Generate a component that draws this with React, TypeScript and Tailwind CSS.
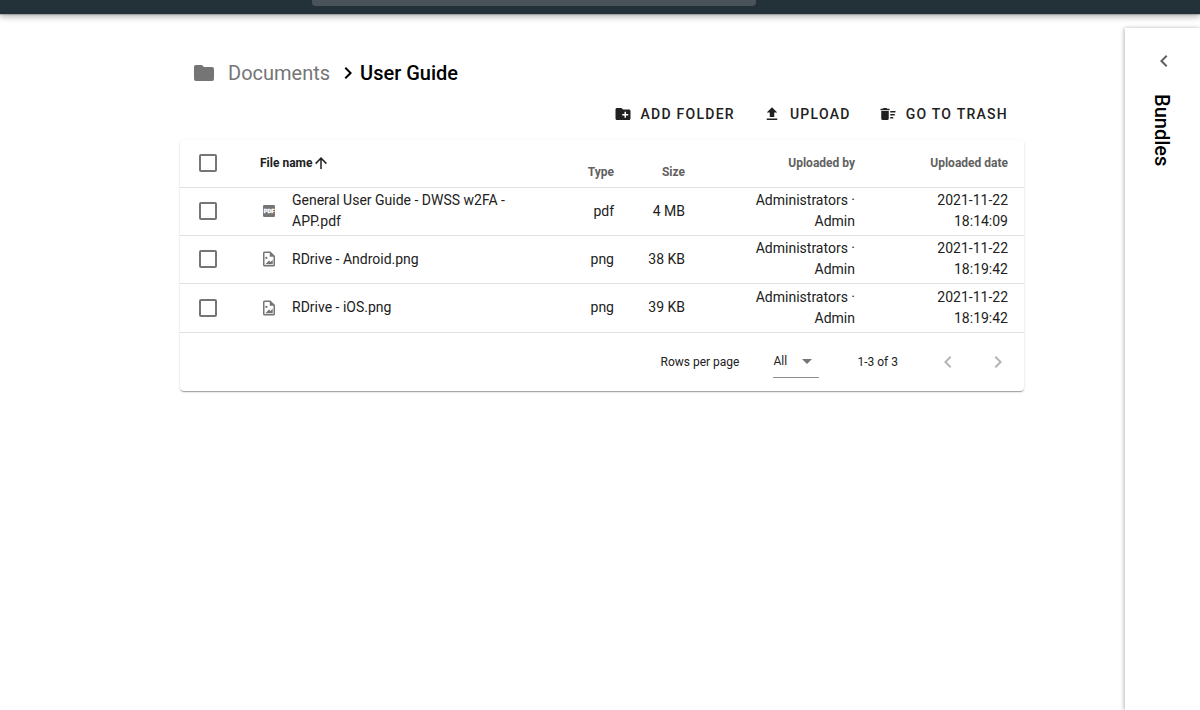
import React, { useState } from "react";

const paths = {
  folder: "M10,4H4C2.89,4 2,4.89 2,6V18A2,2 0 0,0 4,20H20A2,2 0 0,0 22,18V8C22,6.89 21.1,6 20,6H12L10,4Z",
  addFolder:
    "M20 6h-8l-2-2H4c-1.11 0-1.99.89-1.99 2L2 18c0 1.11.89 2 2 2h16c1.11 0 2-.89 2-2V8c0-1.11-.89-2-2-2zm-1 8h-3v3h-2v-3h-3v-2h3V9h2v3h3v2z",
  upload: "M9 16h6v-6h4l-7-7-7 7h4zm-4 2h14v2H5z",
  trash:
    "M15,16H19V18H15V16M15,8H22V10H15V8M15,12H21V14H15V12M3,18A2,2 0 0,0 5,20H11A2,2 0 0,0 13,18V8H3V18M14,5H11L10,4H6L5,5H2V7H14V5Z",
  image:
    "M14,2L20,8V20A2,2 0 0,1 18,22H6A2,2 0 0,1 4,20V4A2,2 0 0,1 6,2H14M18,20V9H13V4H6V20H18M17,13V19H7L12,14L14,16M10,10.5A1.5,1.5 0 0,1 8.5,12A1.5,1.5 0 0,1 7,10.5A1.5,1.5 0 0,1 8.5,9A1.5,1.5 0 0,1 10,10.5Z",
  arrowUp: "M13,20H11V8L5.5,13.5L4.08,12.08L12,4.16L19.92,12.08L18.5,13.5L13,8V20Z",
  right: "M8.59,16.58L13.17,12L8.59,7.41L10,6L16,12L10,18L8.59,16.58Z",
  left: "M15.41,16.58L10.83,12L15.41,7.41L14,6L8,12L14,18L15.41,16.58Z",
  down: "M7,10L12,15L17,10H7Z",
};

function Icon({ name, className }: { name: keyof typeof paths; className: string }) {
  return (
    <svg viewBox="0 0 24 24" aria-hidden="true" className={className} fill="currentColor">
      <path d={paths[name]} />
    </svg>
  );
}

function PdfIcon() {
  return (
    <svg viewBox="0 0 18 18" aria-hidden="true" className="size-[18px] shrink-0">
      <rect x="3" y="3" width="12" height="12" rx="1.3" fill="#757575" />
      <text x="9" y="11.2" textAnchor="middle" fontSize="5.8" fontWeight="900" fill="#fff" stroke="#fff" strokeWidth="0.3">
        PDF
      </text>
    </svg>
  );
}

function Check({ label, checked, onChange }: { label: string; checked: boolean; onChange: () => void }) {
  return (
    <input
      type="checkbox"
      aria-label={label}
      checked={checked}
      onChange={onChange}
      className="block size-[18px] appearance-none rounded-[2px] border-2 border-[#757575] bg-white checked:bg-[#757575]"
    />
  );
}

const files = [
  { name: "General User Guide - DWSS w2FA - APP.pdf", type: "pdf", size: "4 MB", date: "2021-11-22 18:14:09" },
  { name: "RDrive - Android.png", type: "png", size: "38 KB", date: "2021-11-22 18:19:42" },
  { name: "RDrive - iOS.png", type: "png", size: "39 KB", date: "2021-11-22 18:19:42" },
];

const actions = [
  { icon: "addFolder", label: "Add folder" },
  { icon: "upload", label: "Upload" },
  { icon: "trash", label: "Go to trash" },
] as const;

export default function App() {
  const [selected, setSelected] = useState<string[]>([]);
  const toggle = (name: string) =>
    setSelected((s) => (s.includes(name) ? s.filter((n) => n !== name) : [...s, name]));
  const all = selected.length === files.length;

  return (
    <div className="flex min-h-screen flex-col bg-white font-[Roboto,sans-serif] text-[#212121]">
      <header className="relative flex bg-[#233138] pb-2 pl-[312px] shadow-[0_1px_1px_rgba(0,0,0,0.2),0_4px_5px_rgba(0,0,0,0.14),0_2px_8px_rgba(0,0,0,0.12)]">
        <input
          type="search"
          aria-label="Search"
          className="h-[6px] w-[444px] rounded-b bg-[#4a525a] px-4 outline-none"
        />
      </header>

      <div className="flex flex-1">
        <main className="min-w-0 flex-1 pr-[101px] pl-[180px] pt-11">
          <nav aria-label="Breadcrumb" className="flex h-[30px] items-center pl-3 text-xl">
            <a href="#documents" className="flex items-center gap-3 text-[#757575]">
              <Icon name="folder" className="size-6" />
              Documents
            </a>
            <Icon name="right" className="ml-[6px] size-6 text-black" />
            <h1 className="font-medium text-black">User Guide</h1>
          </nav>

          <div className="flex h-[52px] items-center justify-end gap-7 pr-4">
            {actions.map((a) => (
              <button
                key={a.label}
                type="button"
                className="flex items-center gap-[9px] text-sm font-medium tracking-[0.09em] uppercase"
              >
                <Icon name={a.icon} className="size-[18px]" />
                {a.label}
              </button>
            ))}
          </div>

          <section className="rounded shadow-[0_2px_1px_-1px_rgba(0,0,0,0.2),0_1px_1px_rgba(0,0,0,0.14),0_1px_3px_rgba(0,0,0,0.12)]">
            <table className="w-full table-fixed text-sm leading-[21px]">
              <colgroup>
                <col className="w-16" />
                <col />
                <col className="w-[70px]" />
                <col className="w-[71px]" />
                <col className="w-[170px]" />
                <col className="w-[153px]" />
              </colgroup>
              <thead>
                <tr className="h-[47px] border-b border-[#e0e0e0] text-xs text-[#616161]">
                  <th className="pl-[19px]">
                    <Check
                      label="Select all files"
                      checked={all}
                      onChange={() => setSelected(all ? [] : files.map((f) => f.name))}
                    />
                  </th>
                  <th aria-sort="ascending" className="px-4 text-left">
                    <button type="button" className="flex items-center font-bold text-[#212121]">
                      File name
                      <Icon name="arrowUp" className="size-[18px]" />
                    </button>
                  </th>
                  <th className="px-4 pt-[18px] text-right font-bold">Type</th>
                  <th className="px-4 pt-[18px] text-right font-bold">Size</th>
                  <th className="px-4 text-right font-bold">Uploaded by</th>
                  <th className="px-4 text-right font-bold">Uploaded date</th>
                </tr>
              </thead>
              <tbody>
                {files.map((f) => (
                  <tr key={f.name} className="h-12 border-b border-[#e0e0e0] last:h-[49px]">
                    <td className="pl-[19px]">
                      <Check
                        label={`Select ${f.name}`}
                        checked={selected.includes(f.name)}
                        onChange={() => toggle(f.name)}
                      />
                    </td>
                    <td className="px-4">
                      <div className="flex items-center gap-[14px]">
                        {f.type === "pdf" ? (
                          <PdfIcon />
                        ) : (
                          <Icon name="image" className="size-[18px] shrink-0 text-[#757575]" />
                        )}
                        <span>{f.name}</span>
                      </div>
                    </td>
                    <td className="px-4 text-right">{f.type}</td>
                    <td className="px-4 text-right whitespace-nowrap">{f.size}</td>
                    <td className="pr-4 pl-10 text-right">Administrators · Admin</td>
                    <td className="pr-4 pl-10 text-right">{f.date}</td>
                  </tr>
                ))}
              </tbody>
            </table>

            <footer className="flex h-[58px] items-center justify-end pr-[14px] text-xs">
              <label htmlFor="rows">Rows per page</label>
              <div className="relative ml-[34px] w-[46px] border-b border-[#8c8c8c]">
                <select id="rows" className="block h-8 w-full appearance-none outline-none">
                  <option>All</option>
                </select>
                <Icon name="down" className="pointer-events-none absolute top-1 right-0 size-6 text-[#757575]" />
              </div>
              <span className="ml-[38px]">1-3 of 3</span>
              <button type="button" disabled aria-label="Previous page" className="ml-[38px] text-[#b5b5b5]">
                <Icon name="left" className="size-6" />
              </button>
              <button type="button" disabled aria-label="Next page" className="ml-[26px] text-[#b5b5b5]">
                <Icon name="right" className="size-6" />
              </button>
            </footer>
          </section>
        </main>

        <aside className="mt-[14px] flex w-[75px] flex-col items-center pt-[21px] pl-[3px] shadow-[-1px_0_4px_rgba(0,0,0,0.28)]">
          <button type="button" aria-label="Expand bundles" className="text-[#616161]">
            <Icon name="left" className="size-6" />
          </button>
          <h2 className="mt-[21px] mr-1 text-xl font-medium text-black [writing-mode:vertical-rl]">Bundles</h2>
        </aside>
      </div>
    </div>
  );
}
